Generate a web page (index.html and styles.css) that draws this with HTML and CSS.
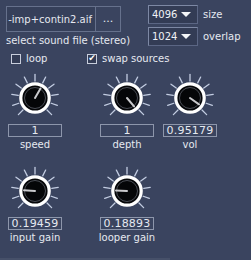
FILE: index.html
```html
<!DOCTYPE html>
<html lang="en">
<head>
  <meta charset="UTF-8">
  <meta name="viewport" content="width=device-width, initial-scale=1.0">
  <title>looper</title>
  <link rel="stylesheet" href="styles.css">
</head>
<body>
  <svg class="defs" width="0" height="0">
    <defs>
      <g id="knob-face">
        <g class="ticks">
          <line x1="25" y1="1.5" x2="25" y2="8" transform="rotate(-135 25 25)"/>
          <line x1="25" y1="1.5" x2="25" y2="8" transform="rotate(-108 25 25)"/>
          <line x1="25" y1="1.5" x2="25" y2="8" transform="rotate(-81 25 25)"/>
          <line x1="25" y1="1.5" x2="25" y2="8" transform="rotate(-54 25 25)"/>
          <line x1="25" y1="1.5" x2="25" y2="8" transform="rotate(-27 25 25)"/>
          <line x1="25" y1="1.5" x2="25" y2="8"/>
          <line x1="25" y1="1.5" x2="25" y2="8" transform="rotate(27 25 25)"/>
          <line x1="25" y1="1.5" x2="25" y2="8" transform="rotate(54 25 25)"/>
          <line x1="25" y1="1.5" x2="25" y2="8" transform="rotate(81 25 25)"/>
          <line x1="25" y1="1.5" x2="25" y2="8" transform="rotate(108 25 25)"/>
          <line x1="25" y1="1.5" x2="25" y2="8" transform="rotate(135 25 25)"/>
        </g>
        <circle class="ring" cx="25" cy="25" r="14.2"/>
        <circle class="inner" cx="25" cy="25" r="10.5"/>
      </g>
    </defs>
  </svg>

  <div class="panel">
    <div class="top">
      <div class="file">
        <div class="file-row">
          <div class="file-name"><span>-imp+contin2.aif</span></div>
          <div class="browse">...</div>
        </div>
        <div class="caption">select sound file (stereo)</div>
      </div>
      <div class="fft">
        <div class="fft-row">
          <div class="dropdown">4096 <i class="arrow"></i></div>
          <span>size</span>
        </div>
        <div class="fft-row">
          <div class="dropdown">1024 <i class="arrow"></i></div>
          <span>overlap</span>
        </div>
      </div>
    </div>

    <div class="checks">
      <label class="check"><span class="box"></span>loop</label>
      <label class="check swap"><span class="box checked">&#10004;</span>swap sources</label>
    </div>

    <div class="knobs">
      <div class="knob-cell">
        <svg class="knob" viewBox="0 0 50 50"><use href="#knob-face"/><line class="pointer" x1="25" y1="25" x2="25" y2="14" transform="rotate(30 25 25)"/></svg>
        <div class="value">1</div>
        <div class="label">speed</div>
      </div>
      <div class="knob-cell">
        <svg class="knob" viewBox="0 0 50 50"><use href="#knob-face"/><line class="pointer" x1="25" y1="25" x2="25" y2="14" transform="rotate(140 25 25)"/></svg>
        <div class="value">1</div>
        <div class="label">depth</div>
      </div>
      <div class="knob-cell">
        <svg class="knob" viewBox="0 0 50 50"><use href="#knob-face"/><line class="pointer" x1="25" y1="25" x2="25" y2="14" transform="rotate(125 25 25)"/></svg>
        <div class="value">0.95179</div>
        <div class="label">vol</div>
      </div>
      <div class="knob-cell">
        <svg class="knob" viewBox="0 0 50 50"><use href="#knob-face"/><line class="pointer" x1="25" y1="25" x2="25" y2="14" transform="rotate(-86 25 25)"/></svg>
        <div class="value">0.19459</div>
        <div class="label">input gain</div>
      </div>
      <div class="knob-cell">
        <svg class="knob" viewBox="0 0 50 50"><use href="#knob-face"/><line class="pointer" x1="25" y1="25" x2="25" y2="14" transform="rotate(-88 25 25)"/></svg>
        <div class="value">0.18893</div>
        <div class="label">looper gain</div>
      </div>
    </div>
    <div class="footer-line"></div>
  </div>
</body>
</html>
```

FILE: styles.css
```css
body {
  margin: 0;
  padding: 0;
  background-color: #3a445f;
  font-family: "DejaVu Sans", "Liberation Sans", sans-serif;
  font-size: 10px;
  color: #e6e9f0;
}
.defs {
  position: absolute;
}
.panel {
  width: 251px;
  height: 260px;
  padding: 5px 0 0 6px;
  box-sizing: border-box;
  display: flex;
  flex-direction: column;
}
.top {
  display: flex;
}
.file {
  width: 142px;
  margin-top: 1px;
}
.file-row {
  display: flex;
}
.file-name {
  width: 90px;
  height: 26px;
  box-sizing: border-box;
  border: 1px solid #66718c;
  background-color: #36405a;
  display: flex;
  align-items: center;
  justify-content: flex-end;
  overflow: hidden;
  white-space: nowrap;
  padding-right: 3px;
  font-size: 10px;
}
.browse {
  width: 25px;
  height: 26px;
  box-sizing: border-box;
  border: 1px solid #66718c;
  border-left: none;
  display: flex;
  align-items: center;
  justify-content: center;
  padding-bottom: 2px;
  font-size: 11px;
}
.caption {
  margin-top: 3px;
  white-space: nowrap;
}
.fft {
  display: flex;
  flex-direction: column;
  gap: 3px;
}
.fft-row {
  display: flex;
  align-items: center;
  gap: 5px;
}
.dropdown {
  width: 50px;
  height: 19px;
  box-sizing: border-box;
  border: 1px solid #5b6684;
  border-top-color: #7d88a4;
  border-left-color: #7d88a4;
  background-color: #333c55;
  display: flex;
  align-items: center;
  padding-left: 3px;
  gap: 4px;
  font-size: 10px;
  color: #f0f2f6;
}
.arrow {
  width: 0;
  height: 0;
  border-left: 5px solid transparent;
  border-right: 5px solid transparent;
  border-top: 5px solid #f4f5f8;
}
.checks {
  display: flex;
  margin-top: 7px;
  padding-left: 5px;
}
.check {
  display: flex;
  align-items: center;
  gap: 5px;
  width: 76px;
}
.check.swap {
  width: auto;
}
.box {
  width: 10px;
  height: 10px;
  box-sizing: border-box;
  border: 1px solid #c8cedc;
  background-color: #333c55;
  display: flex;
  align-items: center;
  justify-content: center;
  font-size: 9px;
  line-height: 1;
  color: #ffffff;
}
.knobs {
  display: grid;
  grid-template-columns: 92px 63px 54px;
  row-gap: 16px;
  margin-top: 9px;
  margin-left: 2px;
}
.knob-cell {
  width: 54px;
  display: flex;
  flex-direction: column;
  align-items: center;
}
.knob {
  width: 50px;
  height: 50px;
}
.ticks line {
  stroke: #c3cde2;
  stroke-width: 1.3;
  stroke-linecap: round;
}
.ring {
  fill: #050608;
  stroke: #ffffff;
  stroke-width: 3.2;
}
.inner {
  fill: none;
  stroke: #4a4d55;
  stroke-width: 1;
}
.pointer {
  stroke: #c9c9cc;
  stroke-width: 2;
  stroke-linecap: round;
}
.value {
  width: 54px;
  height: 13px;
  margin-top: 1px;
  box-sizing: border-box;
  border: 1px solid #8d96ab;
  text-align: center;
  font-size: 11px;
  line-height: 11px;
  letter-spacing: 0.2px;
}
.label {
  margin-top: 2px;
  white-space: nowrap;
}
.footer-line {
  margin-top: auto;
  margin-left: -6px;
  width: 170px;
  height: 2px;
  background-color: #465069;
}
```
